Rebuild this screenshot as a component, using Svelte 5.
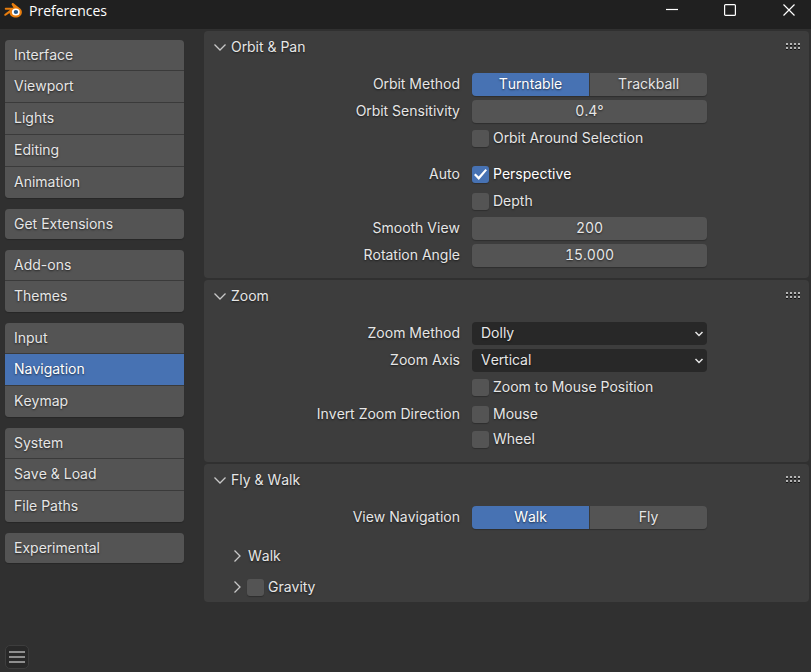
<script lang="ts">
	const groups = [
		['Interface', 'Viewport', 'Lights', 'Editing', 'Animation'],
		['Get Extensions'],
		['Add-ons', 'Themes'],
		['Input', 'Navigation', 'Keymap'],
		['System', 'Save & Load', 'File Paths'],
		['Experimental']
	];

	let section = $state('Navigation');

	let orbitMethod = $state('Turntable');
	let orbitSensitivity = $state('0.4°');
	let orbitSelection = $state(false);
	let autoPerspective = $state(true);
	let autoDepth = $state(false);
	let smoothView = $state('200');
	let rotationAngle = $state('15.000');

	let zoomMethod = $state('Dolly');
	let zoomAxis = $state('Vertical');
	let zoomToMouse = $state(false);
	let invertMouse = $state(false);
	let invertWheel = $state(false);

	let viewNavigation = $state('Walk');
	let gravity = $state(false);

	let open = $state({ orbit: true, zoom: true, fly: true });
</script>

{#snippet header(key: 'orbit' | 'zoom' | 'fly', title: string)}
	<header class="panel-header">
		<button type="button" class="toggle" aria-expanded={open[key]} onclick={() => (open[key] = !open[key])}>
			<svg class="chevron" class:closed={!open[key]} width="12" height="12" viewBox="0 0 12 12" aria-hidden="true">
				<path d="M.5 3.500 6 9 11.500 3.500" />
			</svg>
			{title}
		</button>
		<svg class="grip" width="15" height="8" viewBox="0 0 15 8" aria-hidden="true">
			{#each [0, 4, 8, 12] as x}
				{#each [0, 4] as y}
					<rect {x} {y} width="2" height="2" fill="#b4b4b4" />
					<rect {x} y={y + 2} width="2" height="1" fill="#111" />
				{/each}
			{/each}
		</svg>
	</header>
{/snippet}

{#snippet segmented(options: string[], current: string, pick: (v: string) => void, labelId: string)}
	<div class="segmented" role="group" aria-labelledby={labelId}>
		{#each options as option}
			<button type="button" class:active={option === current} aria-pressed={option === current} onclick={() => pick(option)}>
				{option}
			</button>
		{/each}
	</div>
{/snippet}

{#snippet arrow()}
	<svg class="arrow" width="10" height="8" viewBox="0 0 10 8" aria-hidden="true">
		<path d="M1.5 2 5 5.5 8.5 2" />
	</svg>
{/snippet}

<div class="window">
	<div class="titlebar">
		<svg class="logo" width="18" height="15" viewBox="0 0 18 15" aria-hidden="true">
			<path
				fill="#e87d0d"
				d="M8.1.3c.4-.4 1-.3 1.4 0l6.3 4.9c1.3 1 2.1 2.4 2.1 4 0 3.1-2.8 5.3-6.2 5.3-3.2 0-5.8-1.9-6.1-4.6L2 12.5c-.5.4-1.2.3-1.6-.1-.4-.5-.2-1 .3-1.4l5.5-4.3H1.9c-.7 0-1.1-.4-1.1-1 0-.5.5-.9 1.1-.9h7.6L7.9 2c-.5-.5-.4-1.2.2-1.700z"
			/>
			<ellipse cx="11.8" cy="9" rx="3.9" ry="3.5" fill="#fff" />
			<ellipse cx="11.9" cy="9" rx="2.200" ry="2" fill="#265787" />
		</svg>
		<h1>Preferences</h1>
		<div class="controls">
			<button type="button" aria-label="Minimize">
				<svg width="12" height="12" viewBox="0 0 12 12"><path d="M0 5.500H12" /></svg>
			</button>
			<button type="button" aria-label="Maximize">
				<svg width="12" height="12" viewBox="0 0 12 12"><rect x=".6" y=".6" width="10.8" height="10.8" rx="1" /></svg>
			</button>
			<button type="button" aria-label="Close">
				<svg width="12" height="12" viewBox="0 0 12 12"><path d="M.5.5 11.5 11.5M11.5.5.5 11.5" /></svg>
			</button>
		</div>
	</div>

	<div class="body">
		<aside>
			<nav>
				{#each groups as group}
					<div class="group">
						{#each group as item}
							<button type="button" class:active={item === section} onclick={() => (section = item)}>{item}</button>
						{/each}
					</div>
				{/each}
			</nav>
			<button type="button" class="menu" aria-label="Preferences menu">
				<svg width="16" height="14" viewBox="0 0 16 14">
					<path d="M0 2H16M0 7H16M0 12H16" />
				</svg>
			</button>
		</aside>

		<main>
			<section class="panel">
				{@render header('orbit', 'Orbit & Pan')}
				{#if open.orbit}
					<div class="rows">
						<div class="row">
							<span class="name" id="orbit-method">Orbit Method</span>
							{@render segmented(['Turntable', 'Trackball'], orbitMethod, (v) => (orbitMethod = v), 'orbit-method')}
						</div>
						<div class="row">
							<label class="name" for="orbit-sensitivity">Orbit Sensitivity</label>
							<input class="field" id="orbit-sensitivity" type="text" bind:value={orbitSensitivity} />
						</div>
						<div class="row">
							<label class="check"><input type="checkbox" bind:checked={orbitSelection} /><span>Orbit Around Selection</span></label>
						</div>
						<div class="row spaced">
							<span class="name">Auto</span>
							<label class="check"><input type="checkbox" bind:checked={autoPerspective} /><span>Perspective</span></label>
						</div>
						<div class="row">
							<label class="check"><input type="checkbox" bind:checked={autoDepth} /><span>Depth</span></label>
						</div>
						<div class="row">
							<label class="name" for="smooth-view">Smooth View</label>
							<input class="field" id="smooth-view" type="text" bind:value={smoothView} />
						</div>
						<div class="row">
							<label class="name" for="rotation-angle">Rotation Angle</label>
							<input class="field" id="rotation-angle" type="text" bind:value={rotationAngle} />
						</div>
					</div>
				{/if}
			</section>

			<section class="panel">
				{@render header('zoom', 'Zoom')}
				{#if open.zoom}
					<div class="rows">
						<div class="row">
							<label class="name" for="zoom-method">Zoom Method</label>
							<div class="select">
								<select id="zoom-method" bind:value={zoomMethod}>
									<option>Dolly</option>
									<option>Continue</option>
									<option>Scale</option>
								</select>
								{@render arrow()}
							</div>
						</div>
						<div class="row">
							<label class="name" for="zoom-axis">Zoom Axis</label>
							<div class="select">
								<select id="zoom-axis" bind:value={zoomAxis}>
									<option>Vertical</option>
									<option>Horizontal</option>
								</select>
								{@render arrow()}
							</div>
						</div>
						<div class="row">
							<label class="check"><input type="checkbox" bind:checked={zoomToMouse} /><span>Zoom to Mouse Position</span></label>
						</div>
						<div class="stack">
							<div class="row">
								<span class="name">Invert Zoom Direction</span>
								<label class="check"><input type="checkbox" bind:checked={invertMouse} /><span>Mouse</span></label>
							</div>
							<div class="row">
								<label class="check"><input type="checkbox" bind:checked={invertWheel} /><span>Wheel</span></label>
							</div>
						</div>
					</div>
				{/if}
			</section>

			<section class="panel">
				{@render header('fly', 'Fly & Walk')}
				{#if open.fly}
					<div class="rows">
						<div class="row">
							<span class="name" id="view-navigation">View Navigation</span>
							{@render segmented(['Walk', 'Fly'], viewNavigation, (v) => (viewNavigation = v), 'view-navigation')}
						</div>
					</div>
					<div class="subpanels">
						<div class="subpanel">
							<button type="button" class="toggle" aria-expanded="false">
								<svg class="chevron closed" width="12" height="12" viewBox="0 0 12 12" aria-hidden="true">
									<path d="M.5 3.500 6 9 11.500 3.500" />
								</svg>
								Walk
							</button>
						</div>
						<div class="subpanel">
							<button type="button" class="toggle" aria-expanded="false" aria-label="Gravity settings">
								<svg class="chevron closed" width="12" height="12" viewBox="0 0 12 12" aria-hidden="true">
									<path d="M.5 3.500 6 9 11.500 3.500" />
								</svg>
							</button>
							<label class="check"><input type="checkbox" bind:checked={gravity} /><span>Gravity</span></label>
						</div>
					</div>
				{/if}
			</section>
		</main>
	</div>
</div>

<style>
	:global(body) {
		margin: 0;
		background: #303030;
	}

	.window {
		min-height: 100vh;
		display: flex;
		flex-direction: column;
		background: #303030;
		color: #e6e6e6;
		font: 14px/20px Inter, 'Liberation Sans', sans-serif;
		font-kerning: none;
		text-shadow: 0 1px 2px rgba(0, 0, 0, 0.6);
	}

	button,
	input,
	select {
		box-sizing: border-box;
		margin: 0;
		padding: 0;
		border: 0;
		background: none;
		color: inherit;
		font: inherit;
		font-kerning: inherit;
		text-shadow: inherit;
	}

	/* title bar */
	.titlebar {
		display: flex;
		height: 29px;
		padding-left: 4px;
		background: #202020;
	}
	.logo {
		margin-top: 3px;
	}
	h1 {
		margin: 1px 0 0 7px;
		color: #fff;
		font: 14px/20px 'Open Sans', 'Noto Sans', sans-serif;
		text-shadow: none;
	}
	.controls {
		display: flex;
		height: 20px;
		margin-left: auto;
	}
	.controls button {
		display: grid;
		place-items: center;
		width: 58px;
	}
	.controls button:last-child {
		width: 52px;
		padding-left: 8px;
	}
	.controls svg {
		fill: none;
		stroke: #fff;
		stroke-width: 1.2;
	}

	.body {
		flex: 1;
		display: flex;
	}

	/* sidebar */
	aside {
		flex: none;
		width: 179px;
		display: flex;
		flex-direction: column;
		padding: 11px 20px 3px 5px;
	}
	nav {
		display: grid;
		gap: 11px;
	}
	.group {
		display: grid;
		gap: 1px;
		overflow: hidden;
		border-radius: 4px;
		background: #3a3a3a;
		box-shadow: 0 1px 1px rgba(0, 0, 0, 0.2);
	}
	.group button {
		height: 31px;
		padding: 0 0 1px 9px;
		background: #545454;
		text-align: left;
	}
	.group button:first-child {
		height: 30px;
		padding-bottom: 0;
	}
	.group button.active {
		background: #4772b3;
		color: #fff;
	}
	.menu {
		display: grid;
		place-items: center;
		width: 24px;
		height: 24px;
		margin-top: auto;
		border: 1px solid #3d3d3d;
		border-radius: 5px;
		background: #282828;
	}
	.menu svg {
		stroke: #b0b0b0;
		stroke-width: 1.5;
	}

	/* panels */
	main {
		flex: 1;
		min-width: 0;
		display: flex;
		flex-direction: column;
		gap: 2px;
		padding: 2px 2px 0 0;
	}
	.panel {
		border-radius: 4px;
		background: #3d3d3d;
	}
	.panel-header {
		display: flex;
		align-items: center;
		justify-content: space-between;
		height: 32px;
		padding: 0 8px 0 10px;
	}
	.toggle {
		display: flex;
		align-items: center;
		gap: 5px;
	}
	.chevron {
		fill: none;
		stroke: #c8c8c8;
		stroke-width: 1.3;
	}
	.chevron.closed {
		transform: rotate(-90deg);
	}

	.rows {
		display: grid;
		gap: 4px;
		padding: 10px 0 11px;
	}
	.stack {
		display: grid;
		gap: 2px;
	}
	.row {
		display: grid;
		grid-template-columns: minmax(0, 256fr) minmax(0, 235fr) minmax(0, 90fr);
		column-gap: 12px;
		align-items: center;
		height: 23px;
	}
	.row > :not(.name) {
		grid-column: 2;
	}
	.spaced {
		margin-top: 9px;
	}
	.name {
		padding-bottom: 2px;
		text-align: right;
		white-space: nowrap;
	}

	.segmented {
		display: grid;
		grid-template-columns: 1fr 1fr;
		gap: 1px;
		height: 23px;
		overflow: hidden;
		border-radius: 4px;
		background: #3a3a3a;
		box-shadow: 0 1px 1px rgba(0, 0, 0, 0.25);
	}
	.segmented button {
		padding-bottom: 2px;
		background: #545454;
	}
	.segmented button.active {
		background: #4772b3;
		color: #fff;
	}

	.field {
		width: 100%;
		height: 23px;
		padding-bottom: 2px;
		border-radius: 4px;
		background: #545454;
		box-shadow: 0 1px 1px rgba(0, 0, 0, 0.25);
		font-variant-numeric: tabular-nums;
		text-align: center;
	}

	.select {
		position: relative;
	}
	.select select {
		display: block;
		width: 100%;
		height: 23px;
		padding: 0 0 2px 9px;
		border-radius: 4px;
		background: #282828;
		appearance: none;
	}
	.arrow {
		position: absolute;
		right: 3px;
		bottom: 7px;
		fill: none;
		stroke: #e6e6e6;
		stroke-width: 1.5;
		pointer-events: none;
	}

	.check {
		display: flex;
		align-items: center;
		gap: 4px;
		white-space: nowrap;
	}
	.row .check span {
		padding-bottom: 2px;
	}
	.check input {
		display: grid;
		place-items: center;
		width: 17px;
		height: 17px;
		border-radius: 3px;
		background: #545454;
		box-shadow: 0 1px 1px rgba(0, 0, 0, 0.25);
		appearance: none;
	}
	.check input:checked {
		background: #4772b3;
	}
	.check input:checked::before {
		content: '';
		width: 13px;
		height: 11px;
		background: #fff;
		clip-path: polygon(0 54%, 12% 40%, 36% 68%, 88% 0, 100% 12%, 37% 100%);
	}
	.check input:checked + span {
		color: #fff;
	}

	.subpanels {
		display: grid;
		gap: 1px;
		padding: 1px 0 0 27px;
	}
	.subpanel {
		display: flex;
		align-items: center;
		gap: 4px;
		height: 30px;
	}
</style>
